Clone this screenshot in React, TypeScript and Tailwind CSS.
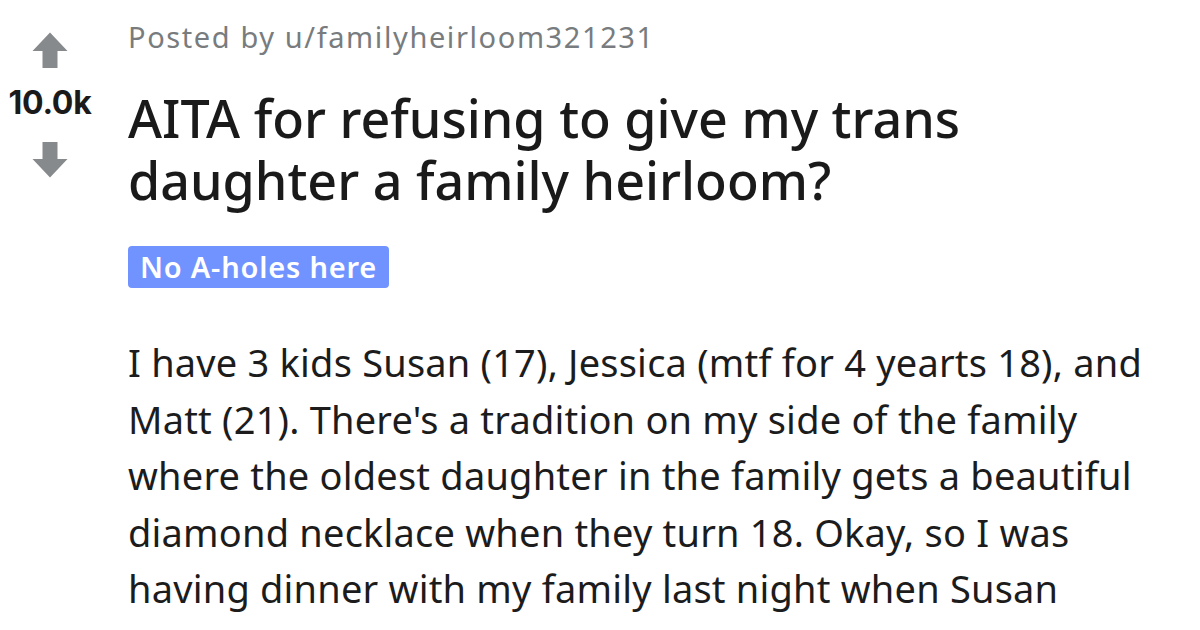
type ArrowProps = {
  down?: boolean;
};

function VoteArrow({ down }: ArrowProps) {
  return (
    <svg
      width="36"
      height="36"
      viewBox="0 0 36 36"
      className={down ? 'rotate-180 fill-[#878a8c]' : 'fill-[#878a8c]'}
    >
      <path d="M18 0.5 L35.5 19 L25.5 19 L25.5 36 L10.5 36 L10.5 19 L0.5 19 Z" />
    </svg>
  );
}

const bodyLines = [
  'I have 3 kids Susan (17), Jessica (mtf for 4 yearts 18), and',
  "Matt (21). There's a tradition on my side of the family",
  'where the oldest daughter in the family gets a beautiful',
  'diamond necklace when they turn 18. Okay, so I was',
  'having dinner with my family last night when Susan',
];

export default function App() {
  return (
    <div className="flex h-[630px] w-[1200px] overflow-hidden bg-white">
      <div className="flex w-[100px] shrink-0 flex-col items-center pt-[32px]">
        <VoteArrow />
        <span className="mt-[17px] font-['Inter',sans-serif] text-[32px] leading-[36px] font-bold tracking-[-0.3px] text-[#1a1a1b]">
          10.0k
        </span>
        <div className="mt-[21px]">
          <VoteArrow down />
        </div>
      </div>

      <div className="flex min-w-0 flex-1 flex-col pt-[19px] pl-[28px]">
        <p className="font-['Noto_Sans',sans-serif] text-[29px] leading-[36px] tracking-[1.6px] whitespace-nowrap text-[#787c7e]">
          Posted by u/familyheirloom321231
        </p>
        <h1 className="mt-[32px] font-['Noto_Sans',sans-serif] text-[52px] leading-[62px] font-medium whitespace-nowrap text-[#1a1a1b]">
          AITA for refusing to give my trans
          <br />
          daughter a family heirloom?
        </h1>
        <div className="mt-[35px] flex">
          <span className="flex h-[42px] items-center rounded-[4px] bg-[#7193ff] px-[12px] font-['Noto_Sans',sans-serif] text-[29px] font-semibold tracking-[0.8px] whitespace-nowrap text-white">
            No A-holes here
          </span>
        </div>
        <p className="mt-[46px] font-['Noto_Sans',sans-serif] text-[38px] leading-[56.5px] tracking-[0.2px] whitespace-nowrap text-[#1c1c1c]">
          {bodyLines.map((line) => (
            <span key={line} className="block">
              {line}
            </span>
          ))}
        </p>
      </div>
    </div>
  );
}
